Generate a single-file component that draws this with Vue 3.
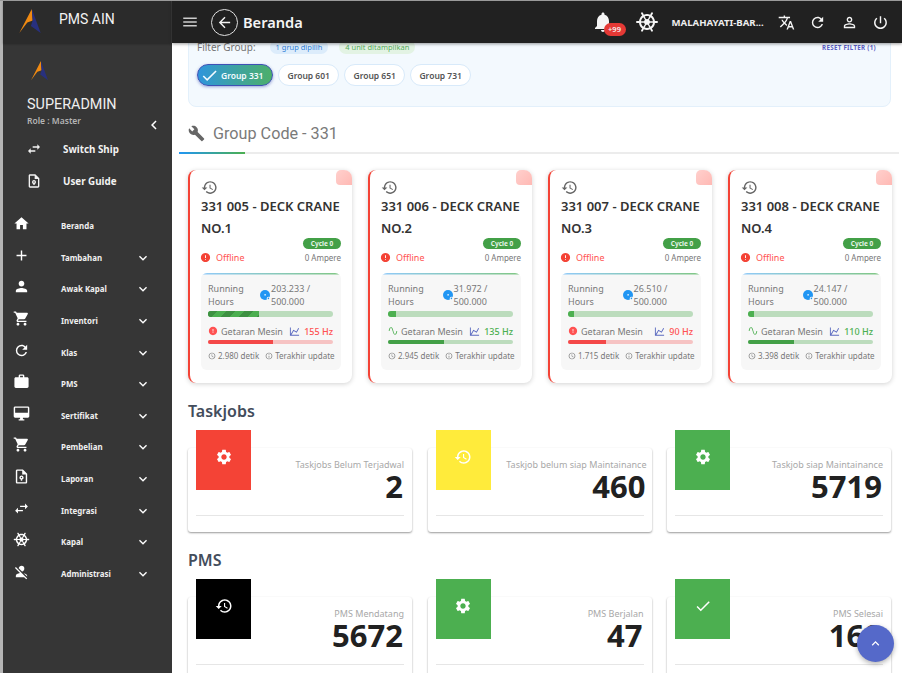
<script setup>
const icons = {
  menu: 'M3 18h18v-2H3v2zm0-5h18v-2H3v2zm0-7v2h18V6H3z',
  back: 'M20 11H7.83l5.59-5.59L12 4l-8 8 8 8 1.41-1.41L7.83 13H20v-2z',
  bell: 'M12 22c1.1 0 2-.9 2-2h-4c0 1.1.9 2 2 2zm6-6v-5c0-3.07-1.63-5.64-4.5-6.32V4c0-.83-.67-1.5-1.5-1.5s-1.5.67-1.5 1.5v.68C7.64 5.36 6 7.92 6 11v5l-2 2v1h16v-1l-2-2z',
  wheel: 'M2,11L4.05,11.1C4.3,8.83 5.5,6.85 7.25,5.56L6.13,3.84C5.86,3.36 6,2.75 6.5,2.47C7,2.2 7.59,2.36 7.87,2.84L8.8,4.66C9.78,4.24 10.86,4 12,4C13.14,4 14.22,4.24 15.2,4.66L16.13,2.84C16.41,2.36 17,2.2 17.5,2.47C18,2.75 18.14,3.36 17.87,3.84L16.75,5.56C18.5,6.85 19.7,8.83 19.95,11.1L22,11A1,1 0 0,1 23,12A1,1 0 0,1 22,13L19.95,12.9C19.7,15.17 18.5,17.15 16.75,18.44L17.87,20.16C18.14,20.64 18,21.25 17.5,21.53C17,21.8 16.41,21.64 16.13,21.16L15.2,19.34C14.22,19.76 13.14,20 12,20C10.86,20 9.78,19.76 8.8,19.34L7.87,21.16C7.59,21.64 7,21.8 6.5,21.53C6,21.25 5.86,20.64 6.13,20.16L7.25,18.44C5.5,17.15 4.3,15.17 4.05,12.9L2,13A1,1 0 0,1 1,12A1,1 0 0,1 2,11M9.07,11.35C9.2,10.74 9.53,10.2 10,9.79L8.34,7.25C7.11,8.19 6.27,9.6 6.05,11.2L9.07,11.35M12,9C12.32,9 12.62,9.05 12.9,9.14L14.28,6.45C13.58,6.16 12.81,6 12,6C11.19,6 10.42,6.16 9.72,6.45L11.1,9.14C11.38,9.05 11.68,9 12,9M14.93,11.35L17.95,11.2C17.73,9.6 16.89,8.19 15.66,7.25L14,9.79C14.47,10.2 14.8,10.74 14.93,11.35M14.93,12.65C14.8,13.26 14.47,13.8 14,14.21L15.66,16.75C16.89,15.81 17.73,14.4 17.95,12.8L14.93,12.65M12,15C11.68,15 11.38,14.95 11.09,14.86L9.72,17.55C10.42,17.84 11.19,18 12,18C12.81,18 13.58,17.84 14.28,17.55L12.91,14.86C12.62,14.95 12.32,15 12,15M9.07,12.65L6.05,12.8C6.27,14.4 7.11,15.81 8.34,16.75L10,14.21C9.53,13.8 9.2,13.26 9.07,12.65Z',
  translate: 'M12.87 15.07l-2.54-2.51.03-.03c1.74-1.94 2.98-4.17 3.71-6.53H17V4h-7V2H8v2H1v1.99h11.17C11.5 7.92 10.44 9.75 9 11.35 8.07 10.32 7.3 9.19 6.69 8h-2c.73 1.63 1.73 3.17 2.98 4.56l-5.09 5.02L4 19l5-5 3.11 3.11.76-2.04zM18.5 10h-2L12 22h2l1.12-3h4.75L21 22h2l-4.5-12zm-2.62 7l1.62-4.33L19.12 17h-3.24z',
  refresh: 'M17.65,6.35C16.2,4.9 14.21,4 12,4A8,8 0 0,0 4,12A8,8 0 0,0 12,20C15.73,20 18.84,17.45 19.73,14H17.65C16.83,16.33 14.61,18 12,18A6,6 0 0,1 6,12A6,6 0 0,1 12,6C13.66,6 15.14,6.69 16.22,7.78L13,11H20V4L17.65,6.35Z',
  personOutline: 'M12 5.9c1.16 0 2.1.94 2.1 2.1s-.94 2.1-2.1 2.1S9.9 9.16 9.9 8s.94-2.1 2.1-2.1m0 9c2.97 0 6.1 1.46 6.1 2.1v1.1H5.9V17c0-.64 3.13-2.1 6.1-2.1M12 4C9.79 4 8 5.79 8 8s1.79 4 4 4 4-1.79 4-4-1.79-4-4-4zm0 9c-2.67 0-8 1.34-8 4v3h16v-3c0-2.66-5.33-4-8-4z',
  power: 'M13,3H11V13H13V3M17.83,5.17L16.41,6.59C18.05,7.91 19,9.9 19,12A7,7 0 0,1 12,19C8.13,19 5,15.87 5,12C5,9.91 5.96,7.92 7.58,6.58L6.17,5.17C2.33,8.39 1.84,14.11 5.06,17.95C8.28,21.79 14,22.28 17.84,19.06C21.68,15.84 22.17,10.12 18.95,6.28C18.62,5.89 18.23,5.5 17.83,5.17Z',
  home: 'M10 20v-6h4v6h5v-8h3L12 3 2 12h3v8z',
  plus: 'M19 13h-6v6h-2v-6H5v-2h6V5h2v6h6v2z',
  person: 'M12 12c2.21 0 4-1.79 4-4s-1.79-4-4-4-4 1.79-4 4 1.79 4 4 4zm0 2c-2.67 0-8 1.34-8 4v2h16v-2c0-2.66-5.33-4-8-4z',
  cart: 'M7 18c-1.1 0-1.99.9-1.99 2S5.9 22 7 22s2-.9 2-2-.9-2-2-2zM1 2v2h2l3.6 7.59-1.35 2.45c-.16.28-.25.61-.25.96 0 1.1.9 2 2 2h12v-2H7.42c-.14 0-.25-.11-.25-.25l.03-.12.9-1.63h7.45c.75 0 1.41-.41 1.75-1.03l3.58-6.49c.08-.14.12-.31.12-.48 0-.55-.45-1-1-1H5.21l-.94-2H1zm16 16c-1.1 0-1.99.9-1.99 2s.89 2 1.99 2 2-.9 2-2-.9-2-2-2z',
  case: 'M20 6h-4V4c0-1.11-.89-2-2-2h-4c-1.11 0-2 .89-2 2v2H4c-1.11 0-1.99.89-1.99 2L2 19c0 1.11.89 2 2 2h16c1.11 0 2-.89 2-2V8c0-1.11-.89-2-2-2zm-6 0h-4V4h4v2z',
  monitor: 'M21 2H3c-1.1 0-2 .9-2 2v12c0 1.1.9 2 2 2h7v2H8v2h8v-2h-2v-2h7c1.1 0 2-.9 2-2V4c0-1.1-.9-2-2-2zm0 9H3V4h18v7z',
  doc: 'M14 2H6c-1.1 0-2 .9-2 2v16c0 1.1.9 2 2 2h12c1.1 0 2-.9 2-2V8l-6-6zm4 18H6V4h7v5h5v11zM12 10.5a3 3 0 0 0-1 5.83V18h2v-1.67a3 3 0 0 0-1-5.83zm0 2a1 1 0 1 1 0 2 1 1 0 0 1 0-2z',
  swap: 'M21,9L17,5V8H10V10H17V13M7,11L3,15L7,19V16H14V14H7V11Z',
  userOff: 'M12,4A4,4 0 0,1 16,8C16,9.95 14.6,11.58 12.75,11.93L8.07,7.25C8.42,5.4 10.05,4 12,4M12.28,14L18.28,20L20,21.72L18.73,23L15.73,20H4V18C4,16.16 6.5,14.61 9.87,14.14L2.78,7.05L4.05,5.78L12.28,14M20,18V19.18L15.14,14.32C18,14.93 20,16.35 20,18Z',
  history: 'M13 3c-4.97 0-9 4.03-9 9H1l3.89 3.89.07.14L9 12H6c0-3.87 3.13-7 7-7s7 3.13 7 7-3.13 7-7 7c-1.93 0-3.68-.79-4.94-2.06l-1.42 1.42C8.27 19.99 10.51 21 13 21c4.97 0 9-4.03 9-9s-4.03-9-9-9zm-1 5v5l4.28 2.54.72-1.21-3.5-2.08V8H12z',
  wrench: 'M22.7 19l-9.1-9.1c.9-2.3.4-5-1.5-6.9-2-2-5-2.4-7.4-1.3L9 6 6 9 1.6 4.7C.4 7.1.9 10.1 2.9 12.1c1.9 1.9 4.6 2.4 6.9 1.5l9.1 9.1c.4.4 1 .4 1.4 0l2.3-2.3c.5-.4.5-1.1.1-1.4z',
  cog: 'M19.14 12.94c.04-.3.06-.61.06-.94 0-.32-.02-.64-.07-.94l2.03-1.58c.18-.14.23-.41.12-.61l-1.92-3.32c-.12-.22-.37-.29-.59-.22l-2.39.96c-.5-.38-1.03-.7-1.62-.94l-.36-2.54c-.04-.24-.24-.41-.48-.41h-3.84c-.24 0-.43.17-.47.41l-.36 2.54c-.59.24-1.13.57-1.62.94l-2.39-.96c-.22-.08-.47 0-.59.22L2.74 8.87c-.12.21-.08.47.12.61l2.03 1.58c-.05.3-.09.63-.09.94s.02.64.07.94l-2.03 1.58c-.18.14-.23.41-.12.61l1.92 3.32c.12.22.37.29.59.22l2.39-.96c.5.38 1.03.7 1.62.94l.36 2.54c.05.24.24.41.48.41h3.84c.24 0 .44-.17.47-.41l.36-2.54c.59-.24 1.13-.56 1.62-.94l2.39.96c.22.08.47 0 .59-.22l1.92-3.32c.12-.22.07-.47-.12-.61l-2.01-1.58zM12 15.6c-1.98 0-3.6-1.62-3.6-3.6s1.62-3.6 3.6-3.6 3.6 1.62 3.6 3.6-1.62 3.6-3.6 3.6z',
  check: 'M9 16.17L4.83 12l-1.42 1.41L9 19 21 7l-1.41-1.41z',
  down: 'M7.41 8.59L12 13.17l4.59-4.58L18 10l-6 6-6-6z',
  up: 'M7.41 15.41L12 10.83l4.59 4.58L18 14l-6-6-6 6z',
  left: 'M15.41 7.41L14 6l-6 6 6 6 1.41-1.41L10.83 12z',
  alert: 'M12 2C6.48 2 2 6.48 2 12s4.48 10 10 10 10-4.48 10-10S17.52 2 12 2zm1 15h-2v-2h2v2zm0-4h-2V7h2v6z',
  chart: 'M16,11.78L20.24,4.45L21.97,5.45L16.74,14.5L10.23,10.75L5.46,19H22V21H2V3H4V17.54L9.5,8L16,11.78Z',
  sine: 'M16.5,21C13.5,21 12.31,16.76 11.05,12.28C10.14,9.04 9,5 7.5,5C4.11,5 4,11.93 4,12H2C2,11.63 2.06,3 7.5,3C10.5,3 11.71,7.25 12.97,11.74C13.83,14.8 15,19 16.5,19C19.94,19 20.06,12.07 20.06,12H22.06C22.06,12.37 22,21 16.5,21Z',
  clock: 'M11.99 2C6.47 2 2 6.48 2 12s4.47 10 9.99 10C17.52 22 22 17.52 22 12S17.52 2 11.99 2zM12 20c-4.42 0-8-3.58-8-8s3.58-8 8-8 8 3.58 8 8-3.58 8-8 8zm.5-13H11v6l5.25 3.15.75-1.23-4.5-2.67z',
  info: 'M11 7h2v2h-2zm0 4h2v6h-2zm1-9C6.48 2 2 6.48 2 12s4.48 10 10 10 10-4.48 10-10S17.52 2 12 2zm0 18c-4.41 0-8-3.59-8-8s3.59-8 8-8 8 3.59 8 8-3.59 8-8 8z',
}

const menu = [
  { label: 'Beranda', icon: 'home' },
  { label: 'Tambahan', icon: 'plus', more: true },
  { label: 'Awak Kapal', icon: 'person', more: true },
  { label: 'Inventori', icon: 'cart', more: true },
  { label: 'Klas', icon: 'refresh', more: true },
  { label: 'PMS', icon: 'case', more: true },
  { label: 'Sertifikat', icon: 'monitor', more: true },
  { label: 'Pembelian', icon: 'cart', more: true },
  { label: 'Laporan', icon: 'doc', more: true },
  { label: 'Integrasi', icon: 'swap', more: true },
  { label: 'Kapal', icon: 'wheel', more: true },
  { label: 'Administrasi', icon: 'userOff', more: true },
]

const groups = ['Group 331', 'Group 601', 'Group 651', 'Group 731']

const machines = [
  { code: '331 005', no: 'NO.1', hours: '203.233', run: 41, hz: 155, vib: 52, ok: false, sec: '2.980' },
  { code: '331 006', no: 'NO.2', hours: '31.972', run: 6, hz: 135, vib: 45, ok: true, sec: '2.945' },
  { code: '331 007', no: 'NO.3', hours: '26.510', run: 5, hz: 90, vib: 30, ok: false, sec: '1.715' },
  { code: '331 008', no: 'NO.4', hours: '24.147', run: 5, hz: 110, vib: 37, ok: true, sec: '3.398' },
]

const taskjobs = [
  { label: 'Taskjobs Belum Terjadwal', value: '2', color: '#f44336', icon: 'cog' },
  { label: 'Taskjob belum siap Maintainance', value: '460', color: '#ffeb3b', icon: 'history', wide: true },
  { label: 'Taskjob siap Maintainance', value: '5719', color: '#4caf50', icon: 'cog' },
]

const pms = [
  { label: 'PMS Mendatang', value: '5672', color: '#000000', icon: 'history' },
  { label: 'PMS Berjalan', value: '47', color: '#4caf50', icon: 'cog' },
  { label: 'PMS Selesai', value: '160', color: '#4caf50', icon: 'check' },
]

const statSections = [
  { title: 'Taskjobs', items: taskjobs },
  { title: 'PMS', items: pms },
]
</script>

<template>
  <div class="app">
    <aside class="side">
      <div class="side-head">
        <svg class="logo" viewBox="0 0 24 28">
          <polygon points="14,0 15,13 9,15 0,27" fill="#f08a12" />
          <polygon points="14,0 24,27 13,19 15,13" fill="#28307e" />
        </svg>
        <span class="brand">PMS AIN</span>
      </div>
      <div class="side-user">
        <svg class="logo-small" viewBox="0 0 24 28">
          <polygon points="14,0 15,13 9,15 0,27" fill="#f08a12" />
          <polygon points="14,0 24,27 13,19 15,13" fill="#28307e" />
        </svg>
        <div class="user-name">SUPERADMIN</div>
        <div class="user-role">Role : Master</div>
        <svg class="collapse" viewBox="0 0 24 24"><path :d="icons.left" /></svg>
      </div>
      <div class="quick">
        <div class="quick-row">
          <svg viewBox="0 0 24 24"><path :d="icons.swap" /></svg>
          <span>Switch Ship</span>
        </div>
        <div class="quick-row">
          <svg viewBox="0 0 24 24"><path :d="icons.doc" /></svg>
          <span>User Guide</span>
        </div>
      </div>
      <nav class="nav">
        <div v-for="item in menu" :key="item.label" class="nav-row">
          <svg class="nav-icon" viewBox="0 0 24 24"><path :d="icons[item.icon]" /></svg>
          <span class="nav-label">{{ item.label }}</span>
          <svg v-if="item.more" class="nav-more" viewBox="0 0 24 24"><path :d="icons.down" /></svg>
        </div>
      </nav>
    </aside>

    <div class="right">
      <header class="top">
        <svg class="menu-icon" viewBox="0 0 24 24"><path :d="icons.menu" /></svg>
        <div class="back"><svg viewBox="0 0 24 24"><path :d="icons.back" /></svg></div>
        <h1 class="page-title">Beranda</h1>
        <div class="bell">
          <svg viewBox="0 0 24 24"><path :d="icons.bell" /></svg>
          <span class="bell-badge">+99</span>
        </div>
        <svg class="wheel" viewBox="0 0 24 24"><path :d="icons.wheel" /></svg>
        <span class="ship-name">MALAHAYATI-BAR...</span>
        <svg class="top-icon" viewBox="0 0 24 24"><path :d="icons.translate" /></svg>
        <svg class="top-icon" viewBox="0 0 24 24"><path :d="icons.refresh" /></svg>
        <svg class="top-icon" viewBox="0 0 24 24"><path :d="icons.personOutline" /></svg>
        <svg class="top-icon" viewBox="0 0 24 24"><path :d="icons.power" /></svg>
      </header>

      <main class="main">
        <div class="scroll">
          <section class="filter">
            <div class="filter-head">
              <span class="filter-label">Filter Group:</span>
              <span class="pill pill-blue">1 grup dipilih</span>
              <span class="pill pill-green">4 unit ditampilkan</span>
              <span class="reset">RESET FILTER (1)</span>
            </div>
            <div class="chips">
              <span v-for="(g, i) in groups" :key="g" class="chip" :class="{ 'chip-on': i === 0 }">
                <svg v-if="i === 0" viewBox="0 0 24 24"><path :d="icons.check" /></svg>
                {{ g }}
              </span>
            </div>
          </section>

          <div class="tab">
            <svg viewBox="0 0 24 24"><path :d="icons.wrench" /></svg>
            <span>Group Code - 331</span>
          </div>
          <div class="tab-line"><span></span></div>

          <div class="machines">
            <article v-for="m in machines" :key="m.code" class="machine">
              <span class="corner"></span>
              <svg class="machine-history" viewBox="0 0 24 24"><path :d="icons.history" /></svg>
              <h3 class="machine-title">{{ m.code }} - DECK CRANE {{ m.no }}</h3>
              <div class="cycle-row"><span class="cycle">Cycle 0</span></div>
              <div class="status-row">
                <svg viewBox="0 0 24 24"><path :d="icons.alert" /></svg>
                <span class="offline">Offline</span>
                <span class="ampere">0 Ampere</span>
              </div>
              <div class="panel">
                <div class="hours">
                  <span class="hours-label">Running Hours</span>
                  <div class="hours-group">
                    <svg class="hours-dot" viewBox="0 0 10 10">
                      <circle cx="5" cy="5" r="5" fill="#2196f3" />
                      <rect x="4.5" y="4" width="1.2" height="1.6" fill="#fff" />
                      <circle cx="8.4" cy="8.4" r="1.7" fill="#f7f7f7" />
                      <circle cx="8.4" cy="8.4" r="0.8" fill="#2196f3" />
                    </svg>
                    <span class="hours-value">{{ m.hours }} /<br />500.000</span>
                  </div>
                </div>
                <div class="bar bar-run">
                  <span :class="{ striped: m.run > 20 }" :style="{ width: m.run + '%' }"></span>
                </div>
                <div class="vib" :class="m.ok ? 'vib-ok' : 'vib-bad'">
                  <svg class="vib-state" viewBox="0 0 24 24"><path :d="m.ok ? icons.sine : icons.alert" /></svg>
                  <span class="vib-name">Getaran Mesin</span>
                  <svg class="vib-chart" viewBox="0 0 24 24"><path :d="icons.chart" /></svg>
                  <span class="vib-value">{{ m.hz }} Hz</span>
                </div>
                <div class="bar bar-vib" :class="m.ok ? 'vib-ok' : 'vib-bad'">
                  <span :style="{ width: m.vib + '%' }"></span>
                </div>
                <div class="foot">
                  <svg viewBox="0 0 24 24"><path :d="icons.clock" /></svg>
                  <span>{{ m.sec }} detik</span>
                  <svg viewBox="0 0 24 24"><path :d="icons.info" /></svg>
                  <span>Terakhir update</span>
                </div>
              </div>
            </article>
          </div>

          <template v-for="sec in statSections" :key="sec.title">
            <h2 class="section-title">{{ sec.title }}</h2>
            <div class="stats">
              <article v-for="s in sec.items" :key="s.label" class="stat" :class="{ 'stat-wide': s.wide }">
                <div class="stat-square" :style="{ background: s.color }">
                  <svg viewBox="0 0 24 24"><path :d="icons[s.icon]" /></svg>
                </div>
                <div class="stat-label">{{ s.label }}</div>
                <div class="stat-value">{{ s.value }}</div>
                <div class="stat-line"></div>
              </article>
            </div>
          </template>
        </div>
        <button class="fab"><svg viewBox="0 0 24 24"><path :d="icons.up" /></svg></button>
      </main>
    </div>
  </div>
</template>

<style>
html, body {
  margin: 0;
  height: 673px;
  overflow: hidden;
  background: #fff;
}
</style>

<style scoped>
.app {
  display: flex;
  width: 902px;
  height: 673px;
  overflow: hidden;
  font-family: 'Noto Sans', 'Open Sans', sans-serif;
  box-sizing: border-box;
  border-top: 1px solid #9a9a9a;
}
svg {
  display: block;
  fill: currentColor;
  flex: none;
}

/* sidebar */
.side {
  width: 172px;
  flex: none;
  box-sizing: border-box;
  border-left: 3px solid #b5b5b5;
  background: #363636;
  color: #fff;
}
.side-head {
  height: 42px;
  display: flex;
  align-items: flex-start;
  background: #2b2b2b;
  border-right: 1px solid #3c3c3c;
  box-shadow: 0 1px 2px rgba(0, 0, 0, 0.3);
  box-sizing: border-box;
}
.logo {
  width: 22px;
  height: 25px;
  margin: 8px 0 0 16px;
}
.brand {
  margin: 9px 0 0 18px;
  font: 14px/18px Roboto, sans-serif;
  color: #f2f2f2;
}
.side-user {
  position: relative;
  height: 58px;
  padding: 18px 0 0 24px;
}
.logo-small {
  width: 17px;
  height: 20px;
  margin-left: 4px;
}
.user-name {
  margin-top: 15px;
  font: 14.4px/18px Roboto, sans-serif;
  color: #efefef;
}
.user-role {
  margin-top: 1px;
  font-size: 8.5px;
  line-height: 12px;
  font-weight: 600;
  color: #b4b4b4;
}
.collapse {
  position: absolute;
  left: 142px;
  top: 73px;
  width: 18px;
  height: 18px;
}
.quick {
  margin-top: 14px;
}
.quick-row {
  display: flex;
  align-items: center;
  height: 32px;
  padding-left: 23px;
  font-size: 9.8px;
  font-weight: 700;
  color: #f2f2f2;
}
.quick-row svg {
  width: 16px;
  height: 16px;
  margin-right: 21px;
}
.nav {
  margin-top: 13.5px;
}
.nav-row {
  display: flex;
  align-items: center;
  height: 31.6px;
  padding-left: 10px;
}
.nav-icon {
  width: 17px;
  height: 17px;
  margin-top: -5px;
}
.nav-label {
  margin-left: 31px;
  font-size: 7.9px;
  font-weight: 700;
  color: #f0f0f0;
  flex: 1;
}
.nav-more {
  width: 16px;
  height: 16px;
  margin-right: 21px;
}

/* top bar */
.right {
  flex: 1;
  min-width: 0;
  display: flex;
  flex-direction: column;
}
.top {
  position: relative;
  z-index: 2;
  height: 42px;
  flex: none;
  display: flex;
  align-items: center;
  padding: 0 13px 0 9px;
  background: #212121;
  color: #f5f5f5;
  box-shadow: 0 1px 3px rgba(0, 0, 0, 0.4);
}
.top-icon {
  width: 17px;
  height: 17px;
  margin-left: 14.5px;
}
.menu-icon {
  width: 18px;
  height: 18px;
  color: #ccc;
}
.back {
  width: 27px;
  height: 27px;
  margin-left: 12px;
  box-sizing: border-box;
  border: 1px solid #e0e0e0;
  border-radius: 50%;
  display: flex;
  align-items: center;
  justify-content: center;
}
.back svg {
  width: 17px;
  height: 17px;
}
.page-title {
  margin: 0 0 0 5px;
  flex: 1;
  font-size: 14.6px;
  font-weight: 600;
}
.bell {
  position: relative;
  width: 24px;
  height: 24px;
}
.bell svg {
  width: 24px;
  height: 24px;
}
.bell-badge {
  position: absolute;
  left: 13px;
  top: 13px;
  width: 22px;
  height: 13px;
  border-radius: 7px;
  background: #e53935;
  font-size: 7.5px;
  font-weight: 600;
  line-height: 13px;
  text-align: center;
}
.wheel {
  width: 24px;
  height: 24px;
  margin-left: 20px;
}
.ship-name {
  margin-left: 13px;
  width: 97px;
  font-size: 9.6px;
  font-weight: 700;
  white-space: nowrap;
  color: #eee;
}
.ship-name + .top-icon {
  margin-left: 9px;
}

/* content */
.main {
  position: relative;
  flex: 1;
  min-height: 0;
  overflow: hidden;
  background: #fff;
}
.scroll {
  margin-top: -20px;
}
.filter {
  margin: 0 11px 0 16px;
  height: 84px;
  padding: 15px 14px 0 8px;
  box-sizing: border-box;
  background: #f3f9fe;
  border: 1px solid #e3f0fb;
  border-radius: 8px;
}
.filter-head {
  display: flex;
  align-items: center;
  height: 16px;
}
.filter-label {
  font-size: 10px;
  color: #757575;
  margin-right: 14px;
}
.pill {
  height: 14px;
  line-height: 14px;
  padding: 0 6px;
  border-radius: 7px;
  font-size: 7.5px;
  margin-right: 11px;
}
.pill-blue {
  background: #dcecfb;
  color: #2f80d6;
}
.pill-green {
  background: #e3f3e4;
  color: #57ad5b;
}
.reset {
  margin-left: auto;
  font-size: 6.2px;
  font-weight: 700;
  letter-spacing: 0.3px;
  color: #5a5fc4;
}
.chips {
  display: flex;
  gap: 5.5px;
  margin-top: 9px;
}
.chip {
  display: flex;
  align-items: center;
  height: 22px;
  padding: 0 8px;
  box-sizing: border-box;
  border: 1px solid #d8eafa;
  border-radius: 11px;
  background: #fff;
  font-size: 8.5px;
  font-weight: 600;
  color: #555;
}
.chip svg {
  width: 19px;
  height: 19px;
  margin-right: 2px;
}
.chip-on {
  padding: 0 8.5px 0 2px;
  background: linear-gradient(90deg, #2f95dc, #4caf6a);
  border-color: #3f51b5;
  color: #f4fbff;
  box-shadow: 0 1px 3px rgba(63, 81, 181, 0.5);
}
.tab {
  display: flex;
  align-items: center;
  margin: 15px 0 0 16px;
  height: 22px;
  font: 16.2px Roboto, sans-serif;
  color: #7a7a7a;
}
.tab svg {
  width: 17px;
  height: 17px;
  margin-right: 8px;
  color: #666;
}
.tab-line {
  height: 2px;
  margin: 8px 3px 0 7px;
  background: #ececec;
}
.tab-line span {
  display: block;
  width: 66px;
  height: 2px;
  background: linear-gradient(90deg, #2196f3, #4caf50);
}
.machines {
  display: flex;
  gap: 16px;
  margin: 16px 0 0 16px;
}
.machine {
  position: relative;
  width: 164px;
  height: 213px;
  padding: 9px 11px 0 11px;
  box-sizing: border-box;
  background: #fff;
  border-left: 2.5px solid #f44336;
  border-radius: 8px;
  box-shadow: 0 1px 5px rgba(0, 0, 0, 0.18);
}
.corner {
  position: absolute;
  top: 0;
  right: 0;
  width: 16px;
  height: 15px;
  border-radius: 5px 8px 0 4px;
  background: linear-gradient(135deg, #ffd0cd, #ffb9b4);
}
.machine-history {
  width: 17px;
  height: 17px;
  color: #666;
}
.machine-title {
  margin: -1px 0 0;
  font-size: 13px;
  line-height: 22px;
  font-weight: 600;
  color: #333;
}
.cycle-row {
  display: flex;
  justify-content: flex-end;
  margin-top: -1px;
}
.cycle {
  width: 38px;
  height: 11px;
  border-radius: 6px;
  background: #43a047;
  color: #e8f5e9;
  font-size: 6.5px;
  font-weight: 700;
  line-height: 11px;
  text-align: center;
}
.status-row {
  display: flex;
  align-items: center;
  height: 11px;
  margin-top: 3px;
}
.status-row svg {
  width: 11px;
  height: 11px;
  color: #f44336;
  margin-left: -1px;
}
.offline {
  margin-left: 5px;
  font-size: 9px;
  color: #ff5252;
}
.ampere {
  margin-left: auto;
  font-size: 8px;
  color: #777;
}
.panel {
  height: 97px;
  margin-top: 10px;
  padding: 8px 8px 0 7px;
  box-sizing: border-box;
  background: linear-gradient(90deg, #90caf9, #81c784) top / 100% 1.5px no-repeat, #f7f7f7;
  border-radius: 6px;
}
.hours {
  display: flex;
  align-items: center;
  height: 27px;
  font-size: 9px;
  line-height: 13px;
  color: #777;
}
.hours-label {
  width: 46px;
  flex: none;
}
.hours-group {
  flex: 1;
  display: flex;
  align-items: center;
  justify-content: center;
  padding-right: 17px;
}
.hours-dot {
  width: 10px;
  height: 10px;
  margin-right: 1px;
}
.hours-value {
  white-space: nowrap;
}
.bar {
  border-radius: 3px;
  overflow: hidden;
}
.bar span {
  display: block;
  height: 100%;
}
.bar-run {
  height: 6px;
  margin-top: 3px;
  background: #bcdcbd;
}
.bar-run span {
  background-color: #4caf50;
}
.bar-run .striped {
  background-image: linear-gradient(135deg, #3e9142 25%, transparent 25%, transparent 50%, #3e9142 50%, #3e9142 75%, transparent 75%);
  background-size: 18px 18px;
}
.vib {
  display: flex;
  align-items: center;
  height: 12px;
  margin-top: 8px;
  font-size: 9px;
  color: #777;
}
.vib-state {
  width: 10px;
  height: 10px;
  margin-right: 3px;
}
.vib-name {
  white-space: nowrap;
}
.vib-chart {
  width: 11px;
  height: 11px;
  margin-left: auto;
  margin-right: 4px;
  color: #5c6bc0;
}
.vib-value {
  font-weight: 500;
  white-space: nowrap;
}
.vib-bad .vib-state,
.vib-bad .vib-value {
  color: #ff5252;
}
.vib-ok .vib-state,
.vib-ok .vib-value {
  color: #4caf50;
}
.bar-vib {
  height: 4px;
  margin-top: 3px;
}
.bar-vib.vib-bad {
  background: #f6c3c3;
}
.bar-vib.vib-bad span {
  background: #f44848;
}
.bar-vib.vib-ok {
  background: #bcdcbd;
}
.bar-vib.vib-ok span {
  background: #43a047;
}
.foot {
  display: flex;
  align-items: center;
  height: 11px;
  margin-top: 6px;
  font-size: 8px;
  color: #777;
  white-space: nowrap;
}
.foot svg {
  width: 8px;
  height: 8px;
  margin-right: 2px;
}
.foot svg + span + svg {
  margin-left: 6px;
}
.section-title {
  margin: 17px 0 0 16px;
  font-size: 16px;
  line-height: 22px;
  font-weight: 600;
  color: #434d5c;
}
.stats {
  display: flex;
  gap: 15.5px;
  margin: 26px 0 16px 16px;
}
.stat {
  position: relative;
  width: 224px;
  height: 84px;
  padding: 10px 8px 0;
  box-sizing: border-box;
  background: #fff;
  border-radius: 3px;
  box-shadow: 0 1px 2px rgba(0, 0, 0, 0.4);
  text-align: right;
}
.stat-square {
  position: absolute;
  left: 8px;
  top: -18px;
  width: 55px;
  height: 60px;
  display: flex;
  align-items: center;
  justify-content: center;
  color: #fff;
  padding-bottom: 6px;
  box-sizing: border-box;
}
.stat-square svg {
  width: 18px;
  height: 18px;
}
.stat-label {
  font-size: 9px;
  line-height: 14px;
  color: #a8a8a8;
}
.stat-value {
  padding-right: 1px;
  font-size: 31px;
  line-height: 29px;
  font-weight: 700;
  color: #212121;
}
.stat-line {
  height: 1px;
  margin-top: 14px;
  background: #e6e6e6;
}
.stat-wide .stat-label,
.stat-wide .stat-value {
  margin-right: -3px;
}
.fab {
  position: absolute;
  left: 685px;
  top: 582px;
  width: 37px;
  height: 37px;
  padding: 0;
  border: none;
  border-radius: 50%;
  background: #5569c9;
  color: #fff;
  display: flex;
  align-items: center;
  justify-content: center;
  box-shadow: 0 2px 5px rgba(0, 0, 0, 0.3);
}
.fab svg {
  width: 15px;
  height: 15px;
}
</style>
